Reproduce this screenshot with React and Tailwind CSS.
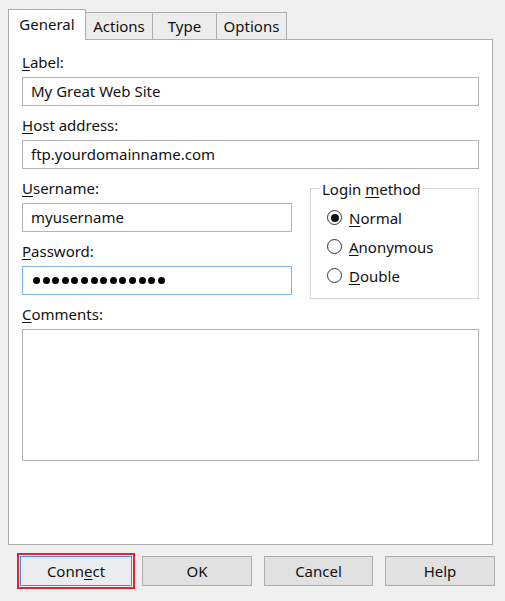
import React from 'react';

const font = { fontFamily: '"Noto Sans", "Open Sans", sans-serif' };

function Acc({ children }) {
  return <span className="underline decoration-1 underline-offset-[2px]">{children}</span>;
}

function Tab({ children, active, w }) {
  if (active) {
    return (
      <div className={`relative z-10 -mb-px flex h-[31px] justify-center border border-b-0 border-[#adadad] bg-white pt-[2px] text-[15px] leading-[24px] ${w}`}>
        {children}
      </div>
    );
  }
  return (
    <div className={`flex h-[27px] justify-center border border-l-0 border-b-0 border-[#adadad] bg-[#ececec] text-[15px] leading-[26px] ${w}`}>
      {children}
    </div>
  );
}

function Field({ label, children, className = '' }) {
  return (
    <div className={className}>
      <div className="h-[20px] text-[15px] leading-[20px]">{label}</div>
      <div className="mt-[5px]">{children}</div>
    </div>
  );
}

function Box({ children, className = '' }) {
  return (
    <div className={`flex h-[29px] items-center border border-[#b4b4b4] bg-white pl-[8px] text-[15px] ${className}`}>
      {children}
    </div>
  );
}

function Radio({ checked, children }) {
  return (
    <div className="flex h-[29px] items-center">
      <span className="flex h-[15px] w-[15px] items-center justify-center rounded-full border border-[#333] bg-white">
        {checked && <span className="h-[8px] w-[8px] rounded-full bg-[#111]" />}
      </span>
      <span className="ml-[7px] text-[15px] leading-[20px]">{children}</span>
    </div>
  );
}

function Button({ children, className = '' }) {
  return (
    <div className={`flex h-[30px] items-center justify-center border text-[15px] ${className}`}>
      {children}
    </div>
  );
}

export default function App() {
  return (
    <div className="h-[601px] w-[505px] overflow-hidden bg-[#f0f0f0] text-[#111]" style={font}>
      <div className="flex items-end pl-[8px] pt-[9px]">
        <Tab active w="w-[78px]">General</Tab>
        <Tab w="w-[67px]">Actions</Tab>
        <Tab w="w-[64px]">Type</Tab>
        <Tab w="w-[70px]">Options</Tab>
      </div>

      <div className="ml-[8px] h-[506px] w-[485px] border border-[#adadad] bg-white px-[13px] pt-[12px]">
        <Field label={<><Acc>L</Acc>abel:</>}>
          <Box>My Great Web Site</Box>
        </Field>
        <Field className="mt-[9px]" label={<><Acc>H</Acc>ost address:</>}>
          <Box>ftp.yourdomainname.com</Box>
        </Field>

        <div className="mt-[9px] flex items-start">
          <div className="w-[270px]">
            <Field label={<><Acc>U</Acc>sername:</>}>
              <Box>myusername</Box>
            </Field>
            <Field className="mt-[9px]" label={<><Acc>P</Acc>assword:</>}>
              <Box className="!border-[#7eb4ea] !pl-[10px] gap-[2.6px]">
                {Array.from({ length: 14 }).map((_, i) => (
                  <span key={i} className="h-[7px] w-[7px] rounded-full bg-black" />
                ))}
              </Box>
            </Field>
          </div>

          <div className="relative ml-[18px] mt-[10px] h-[111px] w-[169px] border border-[#d5d5d5] pl-[16px] pt-[14px]">
            <span className="absolute -top-[8px] left-[9px] bg-white px-[2px] text-[15px] leading-[16px]">
              Login <Acc>m</Acc>ethod
            </span>
            <Radio checked><Acc>N</Acc>ormal</Radio>
            <Radio><Acc>A</Acc>nonymous</Radio>
            <Radio><Acc>D</Acc>ouble</Radio>
          </div>
        </div>

        <Field className="mt-[5px]" label={<><Acc>C</Acc>omments:</>}>
          <div className="h-[132px] border border-[#b4b4b4] bg-white" />
        </Field>
      </div>

      <div className="flex pl-[17px] pt-[8px]">
        <div className="w-[118px] border-2 border-[#e3212f] p-px">
          <Button className="border-[#3c8ee0] bg-[#eaedf0]">
            Conn<Acc>e</Acc>ct
          </Button>
        </div>
        <Button className="ml-[7px] mt-[3px] w-[110px] border-[#adadad] bg-[#e1e1e1]">OK</Button>
        <Button className="ml-[12px] mt-[3px] w-[109px] border-[#adadad] bg-[#e1e1e1]">Cancel</Button>
        <Button className="ml-[12px] mt-[3px] w-[110px] border-[#adadad] bg-[#e1e1e1]">Help</Button>
      </div>
    </div>
  );
}
